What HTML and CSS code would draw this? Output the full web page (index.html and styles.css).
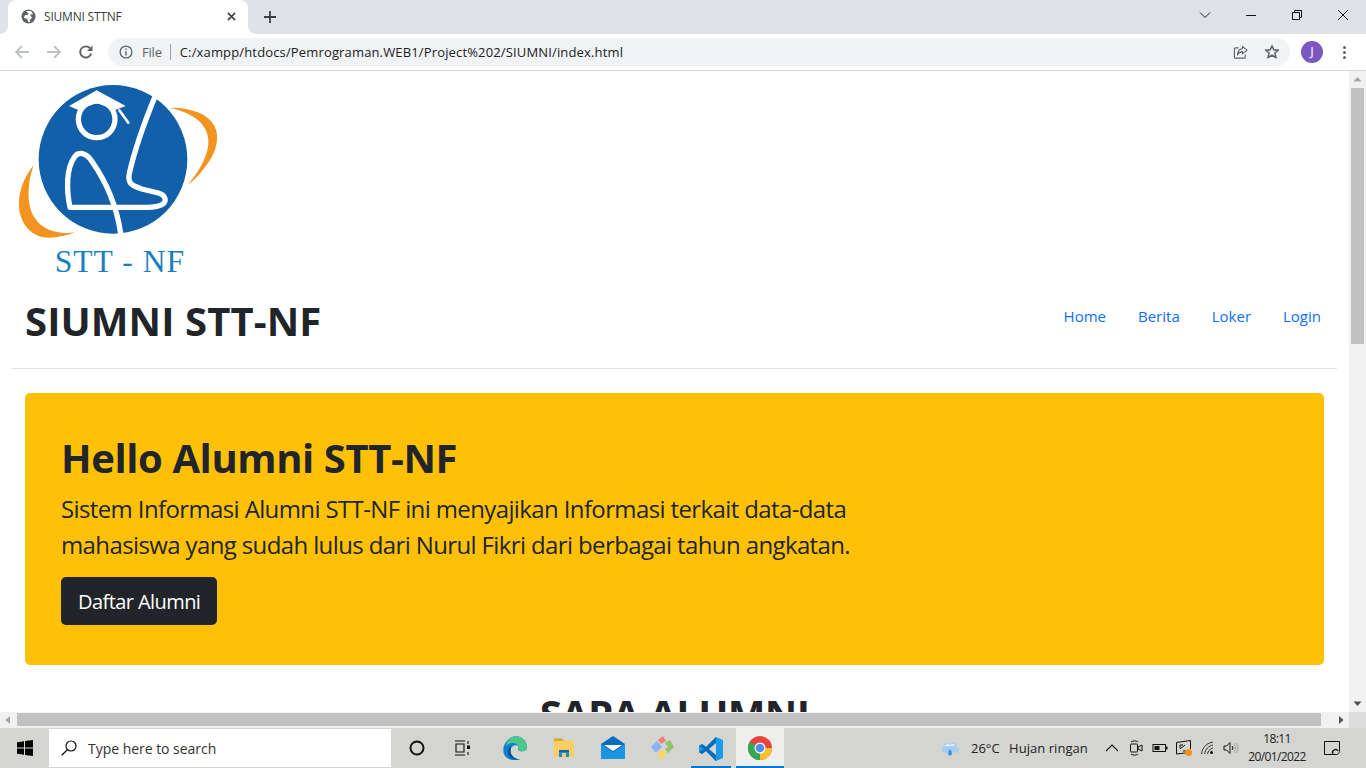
FILE: index.html
```html
<!DOCTYPE html>
<html lang="id">
<head>
<meta charset="utf-8">
<title>SIUMNI STTNF</title>
<link rel="stylesheet" href="styles.css">
</head>
<body>
<div class="tabstrip">
  <div class="tab">
    <svg class="favicon" viewBox="0 0 16 16"><circle cx="8" cy="8" r="7.500" fill="#5f6368"/><path d="M5 2.500 8 4.500 7 6.500 4.500 6.500 3 9 5 10.500 6.500 10 7.500 13.500 9 14 10 11 12 9 10 7.500 10.500 5.500 13 5.500 11 2.500 8 1.800Z" fill="#fff"/></svg>
    <span class="tab-title">SIUMNI STTNF</span>
    <svg class="tab-close" viewBox="0 0 10 10"><path d="M1 1 9 9M9 1 1 9" stroke="#3c4043" stroke-width="1.700"/></svg>
  </div>
  <svg class="newtab" viewBox="0 0 12 12"><path d="M6 0V12M0 6H12" stroke="#3c4043" stroke-width="1.800"/></svg>
  <div class="winctl">
    <div class="winbtn"><svg viewBox="0 0 12 12"><path d="M1 3.500 6 8.500 11 3.500" fill="none" stroke="#222" stroke-width="1"/></svg></div>
    <div class="winbtn"><svg viewBox="0 0 12 12"><path d="M1 6.500H11" stroke="#111" stroke-width="1"/></svg></div>
    <div class="winbtn"><svg viewBox="0 0 12 12"><path d="M1.500 3.500H8.500V10.500H1.500ZM3.500 3.500V1.500H10.500V8.500H8.500" fill="none" stroke="#111" stroke-width="1"/></svg></div>
    <div class="winbtn"><svg viewBox="0 0 12 12"><path d="M1 1 11 11M11 1 1 11" stroke="#111" stroke-width="1"/></svg></div>
  </div>
</div>
<div class="toolbar">
  <div class="navbtn"><svg viewBox="0 0 16 16"><path d="M15 8H2M8 2 2 8 8 14" fill="none" stroke="#bdc1c6" stroke-width="1.800"/></svg></div>
  <div class="navbtn"><svg viewBox="0 0 16 16"><path d="M1 8H14M8 2 14 8 8 14" fill="none" stroke="#bdc1c6" stroke-width="1.800"/></svg></div>
  <div class="navbtn"><svg viewBox="0 0 16 16"><path d="M13.200 9.500A5.600 5.600 0 1 1 12 4.200" fill="none" stroke="#5f6368" stroke-width="1.900"/><path d="M14.500 1.500V7H9Z" fill="#5f6368"/></svg></div>
  <div class="omnibox">
    <svg class="info" viewBox="0 0 14 14"><circle cx="7" cy="7" r="5.900" fill="none" stroke="#5f6368" stroke-width="1.300"/><path d="M7 6.200V10.400M7 3.600V5" stroke="#5f6368" stroke-width="1.400"/></svg>
    <span class="file">File</span>
    <span class="sep"></span>
    <span class="url">C:/xampp/htdocs/Pemrograman.WEB1/Project%202/SIUMNI/index.html</span>
    <svg class="share" viewBox="0 0 16 16"><path d="M6 3H2.500A1 1 0 0 0 1.500 4V13A1 1 0 0 0 2.500 14H12A1 1 0 0 0 13 13V10" fill="none" stroke="#5f6368" stroke-width="1.200"/><path d="M10 1.500 15 5.500 10 9.500V7C7.500 7 6 8 4.800 10.500 5 6.500 7 4.200 10 4Z" fill="none" stroke="#5f6368" stroke-width="1.200" stroke-linejoin="round"/></svg>
    <svg class="star" viewBox="0 0 16 16"><path d="M8 1.800 9.800 6H14.500L10.800 9 12.100 13.800 8 11.100 3.900 13.800 5.200 9 1.500 6H6.200Z" fill="none" stroke="#5f6368" stroke-width="1.500" stroke-linejoin="round"/></svg>
  </div>
  <div class="avatar">J</div>
  <div class="menu"><i></i><i></i><i></i></div>
</div>
<div class="viewport">
  <div class="page">
    <svg class="logo" viewBox="36 -12 684 657">
      <path d="M510 98C560 97 610 110 635 140 660 170 655 215 630 255 610 285 590 310 565 328 600 285 628 235 625 195 622 140 570 112 510 98Z" fill="#f39320"/>
      <path d="M101 270C70 310 55 350 57 395 60 450 100 490 150 488 180 487 205 480 225 472 180 478 130 470 105 430 80 395 80 330 101 270Z" fill="#f39320"/>
      <circle cx="339" cy="253" r="223" fill="#1160a9"/>
      <g fill="none" stroke="#fff" stroke-width="16" stroke-linejoin="round" stroke-linecap="round">
        <path d="M466 62C440 125 405 220 388 295 382 325 395 332 425 342L475 354C500 362 505 385 475 393 455 399 430 397 400 397L210 397C198 340 200 280 222 248 235 228 258 232 275 258 315 315 350 390 362 476"/>
        <circle cx="290" cy="133" r="55"/>
        <path d="M358 106 385 143" stroke-width="8"/>
      </g>
      <path d="M290 46 377 93 345 105 290 84 235 105 207 93Z" fill="#fff"/>
      <text class="logo-text" x="164" y="590">STT - NF</text>
    </svg>
    <header class="site-head">
      <h1 class="brand">SIUMNI STT-NF</h1>
      <nav class="site-nav">
        <a class="nav-link">Home</a>
        <a class="nav-link">Berita</a>
        <a class="nav-link">Loker</a>
        <a class="nav-link">Login</a>
      </nav>
    </header>
    <section class="hero">
      <h1 class="hero-title">Hello Alumni STT-NF</h1>
      <p class="hero-text">Sistem Informasi Alumni STT-NF ini menyajikan Informasi terkait data-data mahasiswa yang sudah lulus dari Nurul Fikri dari berbagai tahun angkatan.</p>
      <a class="hero-btn">Daftar Alumni</a>
    </section>
    <h2 class="section-title">SAPA ALUMNI</h2>
  </div>
  <div class="vbar">
    <svg class="arrow" viewBox="0 0 17 17"><path d="M4.500 10.500 8.500 6 12.500 10.500Z" fill="#a3a3a3"/></svg>
    <div class="vthumb"></div>
    <svg class="arrow arrow-end" viewBox="0 0 17 17"><path d="M4.500 6.500 8.500 11 12.500 6.500Z" fill="#505050"/></svg>
  </div>
</div>
<div class="hbar">
  <svg class="harrow" viewBox="0 0 17 16"><path d="M10 4V12L5.500 8Z" fill="#a3a3a3"/></svg>
  <div class="hthumb"></div>
  <svg class="harrow" viewBox="0 0 17 16"><path d="M7 4V12L11.500 8Z" fill="#505050"/></svg>
  <div class="corner"></div>
</div>
<footer class="taskbar">
  <div class="start"><svg viewBox="0 0 16 16"><path d="M0 2.300 7 1.300V7.500H0ZM8 1.100 16 0V7.500H8ZM0 8.500H7V14.700L0 13.700ZM8 8.500H16V16L8 14.900Z" fill="#000"/></svg></div>
  <div class="search">
    <svg class="search-ico" viewBox="0 0 16 16"><circle cx="10" cy="6" r="5" fill="none" stroke="#111" stroke-width="1.200"/><path d="M6.300 9.700 .7 15.300" stroke="#111" stroke-width="1.300"/></svg>
    <span>Type here to search</span>
  </div>
  <div class="cortana"><svg viewBox="0 0 16 16"><circle cx="8" cy="8" r="6.500" fill="none" stroke="#111" stroke-width="2"/></svg></div>
  <div class="taskview"><svg viewBox="0 0 18 16"><path d="M1 1H11M1 15H11M2 4H10V12H2ZM14 1V4M14 12V15" fill="none" stroke="#111" stroke-width="1.100"/><rect x="13" y="5.500" width="3" height="3.500" fill="#111"/></svg></div>
  <div class="apps">
    <div class="app"><svg viewBox="0 0 24 24"><path d="M12 0C19 0 24 5 24 11 24 15 20 16 17 15 14 14 15 12 16 11 14 8 8 9 7.500 14 7 20 13 24 17 23 14 25 6 25 2 20-2 14 1 3 12 0Z" fill="#0f7fce"/><path d="M12 0C19 0 24 5 24 11 24 15 20 16 17 15 15 14 16 12 15 10 13 6 7 6 3 10 4 4 8 1 12 0Z" fill="#4cc88d"/><path d="M7.500 14C7 20 13 24 17 23 12 25 5 22 5 16 5 13 6 11 8 10 7.700 11 7.600 13 7.500 14Z" fill="#0b4d96"/></svg></div>
    <div class="app"><svg viewBox="0 0 24 24"><path d="M2 3H10L12 5H22V21H2Z" fill="#f9cf63"/><path d="M2 2.500H10L12 5H2Z" fill="#e3a32a"/><path d="M7 14H17V21H14V17H10V21H7Z" fill="#1f84d4"/><path d="M7 14H17V16H7Z" fill="#1a5fa8"/></svg></div>
    <div class="app"><svg viewBox="0 0 24 24"><path d="M0 8 12 0 24 8V23H0Z" fill="#0a6cbd"/><path d="M0 8 12 16 24 8V23H0Z" fill="#1d95e2"/><path d="M3 9H21L12 15Z" fill="#fff"/></svg></div>
    <div class="app"><svg viewBox="0 0 24 24"><path d="M1 11 7 5 12 11 6 17Z" fill="#86b4f5"/><path d="M8 4 13 0 16 5 11 8Z" fill="#ef7f78"/><path d="M15 7 20 4 24 11 18 17 15 13 18 11Z" fill="#8cc665"/><path d="M7 18 12 13 17 18 12 24Z" fill="#f8d568"/></svg></div>
    <div class="app"><svg viewBox="0 0 24 24"><path d="M17 0 24 3V21L17 24 7 14 3 17 0 15V9L3 7 7 10Z" fill="#1a9ae8"/><path d="M17 0 7 10 3 7 0 9 5 12 0 15 3 17 7 14 17 24Z" fill="#0a6cbd"/><path d="M17 6 10 12 17 18Z" fill="#d6d6d3"/></svg></div>
    <div class="app app-active"><svg viewBox="0 0 24 24"><circle cx="12" cy="12" r="12" fill="#e8453c"/><path d="M12 12 1.600 6 A12 12 0 0 0 12 24Z" fill="#34a853"/><path d="M12 12H24A12 12 0 0 1 12 24Z" fill="#fbc02d"/><circle cx="12" cy="12" r="5.500" fill="#fff"/><circle cx="12" cy="12" r="4.300" fill="#4d8cf0"/></svg></div>
  </div>
  <div class="tray">
    <svg class="weather" viewBox="0 0 20 16"><path d="M5 12.500C1 12.500 0 8.500 3 7.500 3 3 8 2 10 4 13 1 18 3 17 7.500 20 8.500 20 12.500 16 12.500Z" fill="#a9cdee"/><path d="M5 6C6 4 8 4 10 5 12 3 15 4 15 6 11 5 8 7 5 6Z" fill="#e6f1fb"/><path d="M10 9C11.500 11 12 12 12 13.500A2 2 0 0 1 8 13.500C8 12 8.500 11 10 9Z" fill="#3a96dd"/></svg>
    <span class="temp">26°C</span>
    <span class="cond">Hujan ringan</span>
    <div class="slot caret"><svg viewBox="0 0 14 8"><path d="M1 7 7 1 13 7" fill="none" stroke="#111" stroke-width="1.100"/></svg></div>
    <div class="slot"><svg viewBox="0 0 16 16"><rect x="2.500" y="4" width="7" height="8" rx="1" fill="none" stroke="#111"/><path d="M10 7 14 5V11L10 9ZM3 2C5 .5 8 .5 10 2M3 14C5 15.500 8 15.500 10 14" fill="none" stroke="#111"/></svg></div>
    <div class="slot"><svg viewBox="0 0 16 16"><rect x="1" y="4.500" width="12.500" height="7" fill="none" stroke="#111"/><rect x="2.500" y="6" width="5" height="4" fill="#111"/><rect x="14" y="6.500" width="1.500" height="3" fill="#111"/></svg></div>
    <div class="slot slot-wide"><svg viewBox="0 0 18 18"><path d="M1.500 3.500 15.500 1.500V10M1.500 3.500V15L10 14M5 10 10 6M5 6H8M5 6V9M8 12H11" fill="none" stroke="#111"/><circle cx="13.500" cy="13.500" r="3.500" fill="#f7930e"/></svg></div>
    <div class="slot"><svg viewBox="0 0 16 16"><path d="M1.500 14C2.500 7 7 3 13 2M4.500 14C5.500 9 8.500 6 13 5M7.500 14C8 11 10 9 13 8" fill="none" stroke="#333"/><circle cx="11.500" cy="12.500" r="1.500" fill="#111"/></svg></div>
    <div class="slot slot-sound"><svg viewBox="0 0 16 16"><path d="M1 6H3.500L7 2.500V13.500L3.500 10H1Z" fill="none" stroke="#111"/><path d="M9 6C10 7 10 9 9 10" fill="none" stroke="#111"/><path d="M11 4.500C12.800 6.500 12.800 9.500 11 11.500M13 3C15.500 6 15.500 10 13 13" fill="none" stroke="#999"/></svg></div>
    <div class="clock"><span>18:11</span><span>20/01/2022</span></div>
    <div class="notif"><svg viewBox="0 0 16 16"><path d="M.5 1.500H15.500V11.500C15.500 13 14 14.500 12.500 14.500H.5Z" fill="none" stroke="#111"/><path d="M9 14A2.500 2.500 0 0 1 14 11" fill="none" stroke="#111" stroke-width="1.400"/></svg></div>
  </div>
</footer>
</body>
</html>
```
FILE: styles.css
```css
* { box-sizing: border-box; }
html, body { margin: 0; padding: 0; height: 768px; width: 1366px; overflow: hidden; }
body { display: flex; flex-direction: column; font-family: "Open Sans", "Noto Sans", sans-serif; color: #212529; background: #fff; }
svg { display: block; }

.tabstrip { height: 34px; background: #dee1e6; display: flex; align-items: center; flex: none; }
.tab { width: 240px; height: 34px; margin-left: 8px; background: #fff; border-radius: 8px 8px 0 0; display: flex; align-items: center; padding: 0 12px 1px 13px; position: relative; }
.tab::before, .tab::after { content: ""; position: absolute; bottom: 0; width: 8px; height: 8px; }
.tab::before { left: -8px; background: radial-gradient(circle at 0 0, transparent 7.5px, #fff 8px); }
.tab::after { right: -8px; background: radial-gradient(circle at 100% 0, transparent 7.5px, #fff 8px); }
.favicon { width: 15px; height: 15px; flex: none; }
.tab-title { font: 12px "Open Sans", sans-serif; letter-spacing: -0.2px; color: #3c4043; margin-left: 8px; flex: 1; white-space: nowrap; }
.tab-close { width: 9px; height: 9px; flex: none; }
.newtab { width: 12px; height: 12px; margin-left: 16px; flex: none; }
.winctl { margin-left: auto; display: flex; align-self: flex-start; }
.winbtn { width: 46px; height: 30px; display: flex; align-items: center; justify-content: center; }
.winbtn svg { width: 12px; height: 12px; }

.toolbar { height: 37px; background: #fff; border-bottom: 1px solid #d6d8db; display: flex; align-items: center; padding-left: 6px; flex: none; }
.navbtn { width: 32px; height: 32px; display: flex; align-items: center; justify-content: center; flex: none; }
.navbtn svg { width: 16px; height: 16px; }
.omnibox { width: 1182px; height: 28px; margin-left: 6px; background: #f1f3f4; border-radius: 14px; display: flex; align-items: center; padding-left: 11px; flex: none; }
.info { width: 14px; height: 14px; flex: none; }
.file { font: 13px "Open Sans", sans-serif; letter-spacing: -0.2px; color: #5f6368; margin-left: 9px; }
.sep { width: 1px; height: 16px; background: #9aa0a6; margin: 0 9px 0 8px; }
.url { font: 13px "Open Sans", sans-serif; letter-spacing: 0.15px; color: #202124; white-space: nowrap; }
.share { width: 15px; height: 15px; margin-left: auto; }
.star { width: 16px; height: 16px; margin: 0 10px 0 16px; }
.avatar { width: 22px; height: 22px; margin-left: 11px; border-radius: 50%; background: #7b57c2; color: #e8def8; font: 600 12px/22px "Open Sans", sans-serif; text-align: center; flex: none; }
.menu { margin-left: 20px; display: flex; flex-direction: column; gap: 2px; }
.menu i { width: 3px; height: 3px; border-radius: 50%; background: #5f6368; display: block; }

.viewport { height: 641px; display: flex; flex: none; }
.page { width: 1349px; height: 641px; overflow: hidden; padding: 0 12px; flex: none; }
.logo { width: 228px; height: 219px; }
.logo-text { font: 95px "Liberation Serif", serif; fill: #1a7fbf; letter-spacing: 3px; }
.site-head { height: 79px; margin: 0; border-bottom: 1px solid #dee2e6; display: flex; align-items: flex-start; justify-content: space-between; padding: 7px 0 0 13px; }
.brand { margin: 0; font-size: 40px; line-height: 48px; font-weight: 700; letter-spacing: 0.1px; }
.site-nav { display: flex; }
.nav-link { color: #0d6efd; font-size: 15px; line-height: 24px; padding: 7px 16px 0; }
.hero { margin: 24px 13px 0; height: 272px; background: #ffc107; border-radius: 5px; padding: 41px 36px 0; }
.hero-title { margin: 0 0 9px; font-size: 40px; line-height: 48px; font-weight: 700; letter-spacing: -0.4px; }
.hero-text { margin: 0 0 14px; width: 800px; font-size: 24px; line-height: 36px; letter-spacing: -0.62px; }
.hero-btn { display: inline-block; height: 48px; padding: 0 17px; background: #212529; color: #fff; border-radius: 5px; font-size: 20px; line-height: 50px; letter-spacing: -0.57px; }
.section-title { margin: 25px 0 0; font-size: 40px; line-height: 48px; font-weight: 700; text-align: center; letter-spacing: -0.65px; }

.vbar { width: 17px; background: #f1f1f1; display: flex; flex-direction: column; flex: none; }
.arrow { width: 17px; height: 17px; flex: none; }
.arrow-end { margin-top: auto; }
.vthumb { height: 256px; width: 13px; margin-left: 2px; background: #c1c1c1; }
.hbar { height: 16px; background: #f1f1f1; display: flex; flex: none; }
.harrow { width: 17px; height: 16px; flex: none; }
.hthumb { width: 1304px; height: 13px; margin-top: 1px; background: #c1c1c1; }
.hthumb + .harrow { margin-left: 11px; }
.corner { width: 17px; background: #dcdcdc; }

.taskbar { height: 40px; background: #d4d4d1; display: flex; align-items: stretch; flex: none; }
.start { width: 49px; display: flex; align-items: center; justify-content: center; }
.start svg { width: 16px; height: 16px; }
.search { width: 342px; margin: 1px 0; background: #fff; display: flex; align-items: center; padding-left: 12px; font: 14px "Open Sans", sans-serif; letter-spacing: -0.03px; color: #333; }
.search-ico { width: 16px; height: 16px; margin-right: 11px; }
.cortana { width: 51px; display: flex; align-items: center; justify-content: center; }
.cortana svg { width: 16px; height: 16px; }
.taskview { width: 41px; display: flex; align-items: center; justify-content: center; }
.taskview svg { width: 18px; height: 16px; }
.apps { display: flex; gap: 1px; margin-left: 8px; }
.app { width: 48px; display: flex; align-items: center; justify-content: center; border-bottom: 2px solid transparent; padding-top: 2px; position: relative; }
.app svg { width: 24px; height: 24px; }
.app:nth-child(5) { border-bottom: 0; }
.app:nth-child(5)::after { content: ""; position: absolute; left: 4px; right: 4px; bottom: 0; height: 2px; background: #0078d4; }
.app-active { background: #eeeeec; border-bottom-color: #0078d4; }
.tray { margin-left: auto; display: flex; align-items: center; padding-right: 11px; font-size: 13px; color: #222; }
.weather { width: 20px; height: 16px; margin-right: 11px; }
.temp { width: 38px; white-space: nowrap; }
.cond { width: 91px; letter-spacing: 0.05px; white-space: nowrap; }
.slot { width: 24px; display: flex; align-items: center; justify-content: center; }
.slot svg { width: 16px; height: 16px; }
.slot.caret svg { width: 14px; height: 8px; }
.slot-wide svg { width: 18px; height: 18px; }
.slot-sound { width: 21px; }
.clock { width: 64px; margin-left: 4px; display: flex; flex-direction: column; align-items: center; font-size: 12px; line-height: 18px; letter-spacing: -0.6px; }
.notif { width: 46px; display: flex; align-items: center; justify-content: center; }
.notif svg { width: 16px; height: 16px; }
```
